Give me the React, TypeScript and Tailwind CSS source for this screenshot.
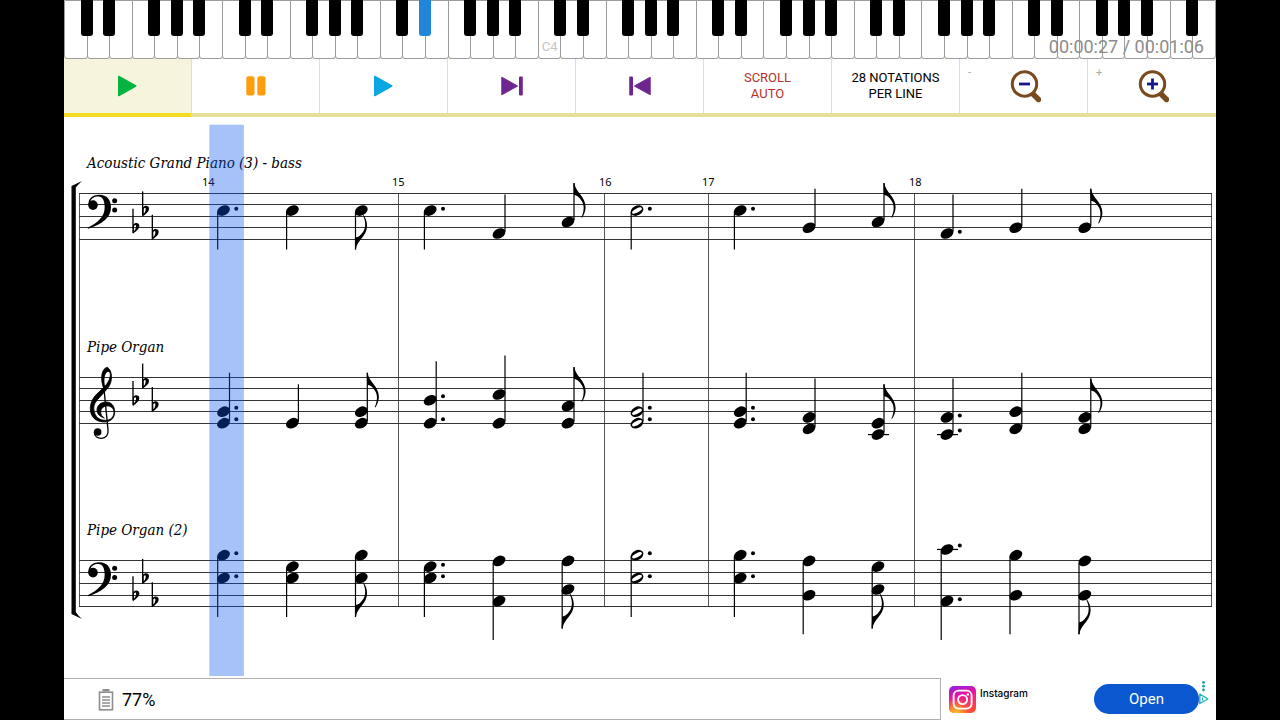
import React, { useState } from 'react';
import clsx from 'clsx';

const WHITE_KEYS = 51;
const MIDDLE_C = 21;
const ACTIVE_KEY = 15;

// C, D, F, G and A have a black key on their right
const hasSharp = (i: number) => [0, 1, 3, 4, 5].includes(i % 7) && i < WHITE_KEYS - 1;

const Keyboard: React.FC = () => (
  <div className="relative">
    <div className="flex h-[59px] bg-[#f0efc0] pl-px">
      {Array.from({ length: WHITE_KEYS }, (_, i) => (
        <div key={i} className="relative -ml-px flex-1">
          <button
            aria-label={`White key ${i + 1}`}
            className="flex h-full w-full items-end justify-center rounded-b-[3px] border border-[#9c9c9c] bg-white pb-1 text-[13px] leading-[14px] text-[#c4c4c4]"
          >
            {i === MIDDLE_C && 'C4'}
          </button>
          {hasSharp(i) && (
            <button
              aria-label={`Black key ${i + 1}`}
              className={clsx(
                'absolute top-0 -right-[5px] z-10 h-9 w-3 rounded-b-[3px]',
                i === ACTIVE_KEY ? 'bg-[#2186da]' : 'bg-black'
              )}
            />
          )}
        </div>
      ))}
    </div>
    <span className="absolute right-3 bottom-0 z-20 text-lg leading-6 text-[#8c8c8c]">00:00:27 / 00:01:06</span>
  </div>
);

const PlayIcon = ({ color }: { color: string }) => (
  <svg width="20" height="22" viewBox="1 0 20 22" fill={color} stroke={color} strokeLinejoin="round">
    <path d="M1.8 1.5 L18.7 11 L1.8 20.5 Z" strokeWidth="1.6" />
  </svg>
);

const PauseIcon = () => (
  <svg width="20" height="20" viewBox="0 0 20 20" fill="#fc9d0b">
    <rect x="0.3" y="0.3" width="8.2" height="19.2" rx="2" />
    <rect x="11.3" y="0.3" width="8.2" height="19.2" rx="2" />
  </svg>
);

const SkipIcon = ({ back }: { back?: boolean }) => (
  <svg width="22" height="20" viewBox="0 0 22 20" fill="#6f2590" className={back ? 'rotate-180' : ''}>
    <path d="M0.8 1.2 L16.6 10 L0.8 18.8 Z" stroke="#6f2590" strokeLinejoin="round" />
    <rect x="18" y="0.5" width="3.8" height="19" rx="1" />
  </svg>
);

const ZoomIcon = ({ plus }: { plus?: boolean }) => (
  <svg width="34" height="34" viewBox="-2 0 34 34" fill="none">
    <path d="M23.5 24.5 L29.5 30.5" stroke="#794a1f" strokeWidth="5.4" strokeLinecap="round" />
    <circle cx="15.5" cy="15" r="12.2" fill="#fff" stroke="#794a1f" strokeWidth="3" />
    <path d="M10 15 H21" stroke="#16168a" strokeWidth="2.8" />
    {plus && <path d="M15.5 9.5 V20.5" stroke="#16168a" strokeWidth="2.8" />}
  </svg>
);

const TOOLS = [
  { id: 'play', label: 'Play', content: <PlayIcon color="#05b440" /> },
  { id: 'pause', label: 'Pause', content: <PauseIcon /> },
  { id: 'playFrom', label: 'Play from here', content: <PlayIcon color="#0ba6e3" /> },
  { id: 'next', label: 'Next', content: <SkipIcon /> },
  { id: 'prev', label: 'Previous', content: <SkipIcon back /> },
  { id: 'scroll', content: <span className="text-[#b8312c]">SCROLL<br />AUTO</span> },
  { id: 'perLine', content: <span>28 NOTATIONS<br />PER LINE</span> },
  { id: 'out', label: 'Zoom out', hint: '-', content: <ZoomIcon /> },
  { id: 'in', label: 'Zoom in', hint: '+', content: <ZoomIcon plus /> },
];

const Toolbar: React.FC = () => {
  const [active, setActive] = useState('play');

  return (
    <div className="grid grid-cols-9 border-b-4 border-[#e4e09a]">
      {TOOLS.map((tool) => (
        <div key={tool.id} className="relative border-r border-[#e6e4a0] last:border-r-0">
          <button
            aria-label={tool.label}
            onClick={() => setActive(tool.id)}
            className={clsx(
              'flex h-[54px] w-full items-center justify-center text-[13px] leading-4',
              active === tool.id && 'bg-[#f7f4de]'
            )}
          >
            {tool.hint && <span className="absolute top-1.5 left-2 text-[11px] text-[#a8a8a8]">{tool.hint}</span>}
            {tool.content}
          </button>
          {active === tool.id && <div className="absolute inset-x-0 -bottom-1 h-1 bg-[#f4dc24]" />}
        </div>
      ))}
    </div>
  );
};

type Note = { x: number; p: number[]; up?: boolean; dot?: boolean; flag?: boolean; half?: boolean };

// p counts steps upwards from the bottom line of the staff
const STAVES: { name: string; top: number; clef: 'bass' | 'treble'; notes: Note[] }[] = [
  {
    name: 'Acoustic Grand Piano (3) - bass',
    top: 193.4,
    clef: 'bass',
    notes: [
      { x: 223.5, p: [5], dot: true },
      { x: 292.4, p: [5] },
      { x: 361.3, p: [5], flag: true },
      { x: 430.2, p: [5], dot: true },
      { x: 499, p: [1], up: true },
      { x: 568, p: [3], up: true, flag: true },
      { x: 637, p: [5], dot: true, half: true },
      { x: 740.2, p: [5], dot: true },
      { x: 809, p: [2], up: true },
      { x: 878, p: [3], up: true, flag: true },
      { x: 947, p: [1], up: true, dot: true },
      { x: 1015.8, p: [2], up: true },
      { x: 1084.8, p: [2], up: true, flag: true },
    ],
  },
  {
    name: 'Pipe Organ',
    top: 377.3,
    clef: 'treble',
    notes: [
      { x: 223.5, p: [2, 0], up: true, dot: true },
      { x: 292.4, p: [0], up: true },
      { x: 361.3, p: [2, 0], up: true, flag: true },
      { x: 430.2, p: [4, 0], up: true, dot: true },
      { x: 499, p: [5, 0], up: true },
      { x: 568, p: [3, 0], up: true, flag: true },
      { x: 637, p: [2, 0], up: true, dot: true, half: true },
      { x: 740.2, p: [2, 0], up: true, dot: true },
      { x: 809, p: [1, -1], up: true },
      { x: 878, p: [0, -2], up: true, flag: true },
      { x: 947, p: [1, -2], up: true, dot: true },
      { x: 1015.8, p: [2, -1], up: true },
      { x: 1084.8, p: [1, -1], up: true, flag: true },
    ],
  },
  {
    name: 'Pipe Organ (2)',
    top: 560.9,
    clef: 'bass',
    notes: [
      { x: 223.5, p: [9, 5], dot: true },
      { x: 292.4, p: [7, 5] },
      { x: 361.3, p: [9, 5], flag: true },
      { x: 430.2, p: [7, 5], dot: true },
      { x: 499, p: [8, 1] },
      { x: 568, p: [8, 3], flag: true },
      { x: 637, p: [9, 5], dot: true, half: true },
      { x: 740.2, p: [9, 5], dot: true },
      { x: 809, p: [8, 2] },
      { x: 878, p: [7, 3], flag: true },
      { x: 947, p: [10, 1], dot: true },
      { x: 1015.8, p: [9, 2] },
      { x: 1084.8, p: [8, 2], flag: true },
    ],
  },
];

const MEASURES = [
  { n: 14, x: 202 },
  { n: 15, x: 392 },
  { n: 16, x: 599 },
  { n: 17, x: 702 },
  { n: 18, x: 909 },
];
const BARLINES = [79.5, 398.5, 604.5, 708.5, 914.5, 1211.5];
const STEP = 5.73;

const BassClef = () => (
  <g>
    <circle cx="99" cy="35" r="14.5" />
    <path d="M86 36 C83 17 96 4 118 4 C141 4 153 20 153 42 C153 72 126 92 84 106 L83 103 C114 88 134 68 134 42 C134 21 128 9 115 9 C102 9 93 15 91 25 Z" />
    <circle cx="164" cy="22" r="7.5" />
    <circle cx="164" cy="50" r="7.5" />
  </g>
);

const TrebleClef = () => (
  <g transform="translate(0 -127)">
    <path
      stroke="#000"
      strokeWidth="2.5"
      d="M131 160 C119 128 126 100 142 97 C157 106 160 140 143 160 L118 188 C104 202 100 212 102 226 C105 246 118 256 136 256 C152 256 161 247 162 233 C162 219 152 213 142 213 C131 213 122 221 122 231 C122 240 127 245 133 249 C119 245 111 236 111 226 C111 211 123 201 139 201 C154 201 164 213 164 231 C164 250 152 261 132 261 C107 261 91 245 91 221 C91 200 102 184 116 172 L131 157 C143 147 152 130 151 117 C150 110 146 108 142 110 C133 115 129 132 134 156 Z"
    />
    <path d="M131 152 L144 284 C146 300 138 310 124 310 C112 310 103 303 103 292" fill="none" stroke="#000" strokeWidth="4" />
    <circle cx="113" cy="291" r="11.5" />
  </g>
);

const Flat = ({ x, y }: { x: number; y: number }) => (
  <g transform={`translate(${x} ${y})`}>
    <path d="M0 -74 V-1" stroke="#000" strokeWidth="4" />
    <path
      fillRule="evenodd"
      d="M0 1 V-26 C6 -33 19 -33 19 -22 C19 -13 9 -6 0 1 Z M3 -22 C7 -27 10 -25 9 -19 C8 -13 6 -9 3 -7 Z"
    />
  </g>
);

const Chord = ({ note, bottom }: { note: Note; bottom: number }) => {
  const ys = note.p.map((p) => bottom - p * STEP);
  const high = Math.min(...ys);
  const low = Math.max(...ys);
  const stemX = note.up ? note.x + 6 : note.x - 5.8;
  const tip = note.up ? high - 39 : low + 39;

  return (
    <g>
      <path d={`M${stemX} ${note.up ? low - 2 : high + 2} V${tip}`} stroke="#000" strokeWidth="1.2" />
      {note.p.map((p, i) => (
        <g key={p}>
          {(p <= -2 || p >= 10) && (
            <path d={`M${note.x - 10} ${ys[i]} h21`} stroke="#000" strokeWidth="1.2" />
          )}
          <g transform={`translate(${note.x} ${ys[i]}) rotate(-28)`}>
            <ellipse rx="6.8" ry="4.8" />
            {note.half && <ellipse rx="5.4" ry="2" fill="#fff" />}
          </g>
          {note.dot && <circle cx={note.x + 12.8} cy={ys[i] - (p % 2 === 0 ? 4 : 1.8)} r="2" />}
        </g>
      ))}
      {note.flag && (
        <path
          transform={`translate(${stemX} ${tip}) scale(1 ${note.up ? 1 : -1})`}
          d="M-0.6 0 H0.5 C1 9 11.6 13 11.6 24 C11.6 28 10 32 8 34.7 L7.4 34.4 C10 29 11 22 7 17 C5 14 3 12.5 0 12 Z"
        />
      )}
    </g>
  );
};

const Score: React.FC = () => (
  <svg viewBox="64 117 1152 561" className="block w-full" role="img" aria-label="Sheet music">
    <path d="M71.5 186 L82 181 C79 184 77 186 75.8 187.5 V612 C77 614 79 616 82 619 L71.5 614 Z" />
    {BARLINES.map((x) => (
      <path key={x} d={`M${x} 193 V607`} stroke="#555" />
    ))}
    {MEASURES.map((m) => (
      <text key={m.n} x={m.x} y="186" fontSize="11" fontFamily='"Noto Sans", sans-serif'>{m.n}</text>
    ))}
    {STAVES.map((staff) => (
      <g key={staff.name}>
        <text x="87" y={Math.floor(staff.top) - 25} fontSize="15" fontStyle="italic" fontFamily='"DejaVu Serif Condensed", "DejaVu Serif", serif'>
          {staff.name}
        </text>
        {[0, 1, 2, 3, 4].map((i) => (
          <path key={i} d={`M79 ${Math.floor(staff.top + i * 2 * STEP) + 0.5} H1212`} stroke="#333" />
        ))}
        <g transform={`translate(60 ${staff.top}) scale(0.3333)`}>
          {staff.clef === 'bass' ? <BassClef /> : <TrebleClef />}
          {[[219, 120], [248, 68], [277, 138]].map(([x, y]) => (
            <Flat key={x} x={x} y={staff.clef === 'bass' ? y : y - 35} />
          ))}
        </g>
        {staff.notes.map((note) => (
          <Chord key={note.x} note={note} bottom={staff.top + 8 * STEP} />
        ))}
      </g>
    ))}
    {/* playback cursor */}
    <rect x="209.3" y="124.7" width="34.6" height="551.3" fill="#0a54ed" fillOpacity="0.36" />
  </svg>
);

const BatteryIcon = () => (
  <svg width="16" height="22" viewBox="0 0 16 22" fill="none" stroke="#8e8e8e">
    <path d="M4.5 1.2 H11.5" strokeWidth="2.4" />
    <rect x="1.5" y="3.2" width="13" height="17.6" strokeWidth="1.6" />
    <path d="M4 8 H12 M4 11 H12 M4 14 H12 M4 17 H12" strokeWidth="1.3" />
  </svg>
);

const InstagramLogo = () => (
  <svg width="27" height="27" viewBox="0 0 27 27" fill="none">
    <defs>
      <linearGradient id="igBase" x1="0" y1="0" x2="0.25" y2="1">
        <stop offset="0" stopColor="#8a1fe8" />
        <stop offset="0.45" stopColor="#f0149a" />
        <stop offset="1" stopColor="#ff4a3a" />
      </linearGradient>
      <radialGradient id="igGlow" cx="0.25" cy="1.05" r="0.65">
        <stop offset="0" stopColor="#ffd22e" />
        <stop offset="0.5" stopColor="#ff8a20" stopOpacity="0.8" />
        <stop offset="1" stopColor="#ff3a60" stopOpacity="0" />
      </radialGradient>
    </defs>
    <rect width="27" height="27" rx="5" fill="url(#igBase)" />
    <rect width="27" height="27" rx="5" fill="url(#igGlow)" />
    <rect x="4.6" y="4.6" width="18" height="18" rx="5" stroke="#fff" strokeWidth="1.9" />
    <circle cx="13.6" cy="13.6" r="4.5" stroke="#fff" strokeWidth="1.9" />
    <circle cx="18.8" cy="8.5" r="1.2" fill="#fff" />
  </svg>
);

const AdChoices = () => (
  <svg width="10" height="24" viewBox="0 0 10 24" fill="none">
    <g fill="#1aa5a0">
      <circle cx="4.5" cy="1.5" r="1.4" />
      <circle cx="4.5" cy="5.2" r="1.4" />
      <circle cx="4.5" cy="9" r="1.4" />
    </g>
    <path d="M0.8 13.2 L9 18 L0.8 22.5 Z" stroke="#22b5b5" strokeWidth="1.4" strokeLinejoin="round" />
    <path d="M3.5 16.5 V19.5" stroke="#22b5b5" strokeWidth="1.2" />
  </svg>
);

const BottomBar: React.FC = () => (
  <footer className="flex h-[42px]">
    <div className="flex flex-1 items-center gap-2 border-y border-r border-[#b0b0b0] pt-px pl-[34px] text-lg">
      <BatteryIcon />
      <span>77%</span>
    </div>
    <div className="flex w-[275px] items-center pl-2">
      <InstagramLogo />
      <span className="ml-1 self-start pt-2 font-['Inter'] text-[10px] leading-[14px] font-medium">Instagram</span>
      <button className="ml-auto h-[30px] w-[105px] rounded-full bg-[#0b57d0] text-[15px] text-white">Open</button>
      <a href="#" aria-label="Ad choices" className="mr-[7px] self-start pt-[3px]">
        <AdChoices />
      </a>
    </div>
  </footer>
);

const App: React.FC = () => {
  return (
    <div className="min-h-screen bg-black px-[5%] font-['Roboto',sans-serif] text-black">
      <div className="flex min-h-screen flex-col bg-white">
        <Keyboard />
        <Toolbar />
        <main className="flex-1">
          <Score />
        </main>
        <BottomBar />
      </div>
    </div>
  );
};

export default App;
